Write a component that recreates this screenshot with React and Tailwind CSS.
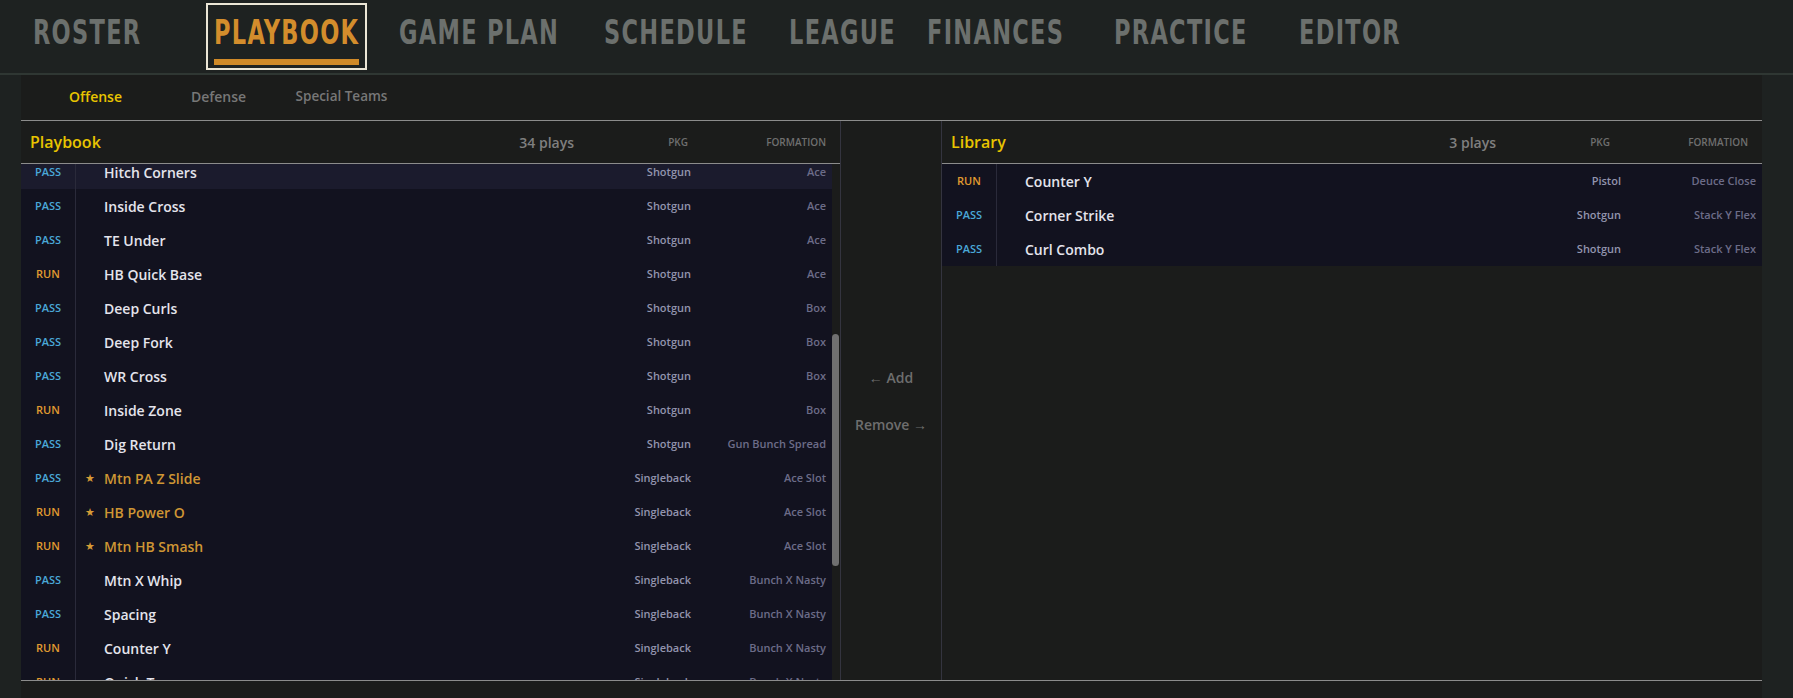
import React from 'react';

const NAV = [
  { label: 'ROSTER', w: 'w-[181px]' },
  { label: 'PLAYBOOK', w: 'w-[185px]', active: true },
  { label: 'GAME PLAN', w: 'w-[205px]' },
  { label: 'SCHEDULE', w: 'w-[185px]' },
  { label: 'LEAGUE', w: 'w-[138px]' },
  { label: 'FINANCES', w: 'w-[187px]' },
  { label: 'PRACTICE', w: 'w-[185px]' },
  { label: 'EDITOR', w: 'w-[160px]' },
];

// 34 plays total; the list is scrolled, so only a window of it is drawn
const PLAYS = [
  ['PASS', 'Slants', 'Shotgun', 'Ace'],
  ['PASS', 'Four Verticals', 'Shotgun', 'Ace'],
  ['PASS', 'Mesh', 'Shotgun', 'Ace'],
  ['RUN', 'Inside Zone', 'Shotgun', 'Ace'],
  ['PASS', 'Y Stick', 'Shotgun', 'Ace'],
  ['PASS', 'Smash', 'Shotgun', 'Ace'],
  ['RUN', 'HB Draw', 'Shotgun', 'Ace'],
  ['PASS', 'Flood', 'Shotgun', 'Ace'],
  ['PASS', 'Drive', 'Shotgun', 'Ace'],
  ['PASS', 'Dagger', 'Shotgun', 'Ace'],
  ['PASS', 'Curl Flat', 'Shotgun', 'Ace'],
  ['PASS', 'Hitch Corners', 'Shotgun', 'Ace'],
  ['PASS', 'Inside Cross', 'Shotgun', 'Ace'],
  ['PASS', 'TE Under', 'Shotgun', 'Ace'],
  ['RUN', 'HB Quick Base', 'Shotgun', 'Ace'],
  ['PASS', 'Deep Curls', 'Shotgun', 'Box'],
  ['PASS', 'Deep Fork', 'Shotgun', 'Box'],
  ['PASS', 'WR Cross', 'Shotgun', 'Box'],
  ['RUN', 'Inside Zone', 'Shotgun', 'Box'],
  ['PASS', 'Dig Return', 'Shotgun', 'Gun Bunch Spread'],
  ['PASS', 'Mtn PA Z Slide', 'Singleback', 'Ace Slot', true],
  ['RUN', 'HB Power O', 'Singleback', 'Ace Slot', true],
  ['RUN', 'Mtn HB Smash', 'Singleback', 'Ace Slot', true],
  ['PASS', 'Mtn X Whip', 'Singleback', 'Bunch X Nasty'],
  ['PASS', 'Spacing', 'Singleback', 'Bunch X Nasty'],
  ['RUN', 'Counter Y', 'Singleback', 'Bunch X Nasty'],
  ['RUN', 'Quick Toss', 'Singleback', 'Bunch X Nasty'],
  ['PASS', 'PA Boot', 'Singleback', 'Bunch X Nasty'],
  ['RUN', 'Outside Zone', 'Singleback', 'Deuce Close'],
  ['PASS', 'Corner Strike', 'Singleback', 'Deuce Close'],
  ['RUN', 'HB Stretch', 'Pistol', 'Deuce Close'],
  ['PASS', 'Curl Combo', 'Pistol', 'Stack Y Flex'],
  ['RUN', 'Power', 'Pistol', 'Stack Y Flex'],
  ['PASS', 'Levels', 'Pistol', 'Stack Y Flex'],
];

const FIRST_VISIBLE = 11;
const VISIBLE = PLAYS.slice(FIRST_VISIBLE, FIRST_VISIBLE + 16);

const LIBRARY = [
  ['RUN', 'Counter Y', 'Pistol', 'Deuce Close'],
  ['PASS', 'Corner Strike', 'Shotgun', 'Stack Y Flex'],
  ['PASS', 'Curl Combo', 'Shotgun', 'Stack Y Flex'],
];

const PlayRow = ({ play, hover }) => {
  const [type, name, pkg, formation, fav] = play;
  return (
    <div className={`flex items-center h-[34px] shrink-0 ${hover ? 'bg-[#1b1b2d]' : 'bg-[#12121f]'}`}>
      <div
        className={`w-[55px] h-full flex items-center justify-center border-r border-[#2a2a3a] text-[11px] font-semibold ${
          type === 'RUN' ? 'text-[#e09a30]' : 'text-[#4aa8d8]'
        }`}
      >
        {type}
      </div>
      <div className="w-[28px] text-center text-[11px] text-[#d59a36]">{fav ? '★' : ''}</div>
      <div className={`flex-1 text-[14px] font-semibold ${fav ? 'text-[#cf9634]' : 'text-[#e4e4ec]'}`}>{name}</div>
      <div className="text-[11px] font-semibold text-[#9294ae] text-right">{pkg}</div>
      <div className="w-[141px] pr-[6px] text-[11px] font-semibold text-[#6c6c88] text-right">{formation}</div>
    </div>
  );
};

const PanelHeader = ({ title, count }) => (
  <div className="h-[43px] shrink-0 flex items-center border-b border-[#8c8c8c] pl-[9px] pr-[14px]">
    <div className="flex-1 text-[16px] font-semibold text-[#e8c400]">{title}</div>
    <div className="pr-[54px] text-[14px] font-semibold text-[#7f7f7f]">{count}</div>
    <div className="w-[60px] text-right text-[10px] font-semibold text-[#6f6f6f]">PKG</div>
    <div className="w-[138px] text-right text-[10px] font-semibold text-[#6f6f6f]">FORMATION</div>
  </div>
);

export default function App() {
  return (
    <div className="w-[1793px] h-[698px] overflow-hidden bg-[#1e2221] font-['Open_Sans',sans-serif]">
      <nav className="h-[75px] flex items-start border-b-2 border-[#2f3733] pl-[25px]">
        {NAV.map((item) => (
          <div key={item.label} className={`${item.w} shrink-0 pt-[3px]`}>
            <div
              className={`inline-flex flex-col h-[67px] px-[6px] border-2 ${
                item.active ? 'border-[#ebe6d6]' : 'border-transparent'
              }`}
            >
              <span
                className={`mt-[8px] whitespace-nowrap text-[25px] leading-[40px] font-bold tracking-[1.3px] scale-y-[1.37] font-['DejaVu_Sans_Condensed',sans-serif] ${
                  item.active ? 'text-[#d38d2c]' : 'text-[#6c706d]'
                }`}
              >
                {item.label}
              </span>
              {item.active && <div className="mt-[6px] h-[6px] bg-[#d08a28]" />}
            </div>
          </div>
        ))}
      </nav>

      <div className="ml-[21px] w-[1741px] h-[623px] bg-[#1b1c1b] flex flex-col">
        <div className="h-[46px] shrink-0 flex items-center pl-[13px] pb-[3px] border-b border-[#8c8c8c]">
          <div className="w-[123px] text-center text-[14px] font-semibold text-[#e8c400]">Offense</div>
          <div className="w-[123px] text-center text-[14px] font-semibold text-[#777777]">Defense</div>
          <div className="w-[123px] text-center text-[13.5px] font-semibold text-[#777777]">Special Teams</div>
        </div>

        <div className="h-[560px] shrink-0 flex border-b border-[#8c8c8c]">
          <section className="w-[820px] shrink-0 flex flex-col border-r border-[#34343f]">
            <PanelHeader title="Playbook" count={`${PLAYS.length} plays`} />
            <div className="flex-1 flex min-h-0">
              <div className="flex-1 overflow-hidden">
                <div className="-mt-[9px] flex flex-col">
                  {VISIBLE.map((p, i) => (
                    <PlayRow key={i} play={p} hover={i === 0} />
                  ))}
                </div>
              </div>
              <div className="w-[8px] shrink-0 flex flex-col pt-[170px] pr-[1px]">
                <div className="h-[232px] rounded-full bg-[#707070]" />
              </div>
            </div>
          </section>

          <div className="w-[101px] shrink-0 flex flex-col items-center justify-center gap-[26px] border-r border-[#34343f] text-[14px] font-semibold text-[#6e6e6e]">
            <div>← Add</div>
            <div>Remove →</div>
          </div>

          <section className="flex-1 flex flex-col">
            <PanelHeader title="Library" count={`${LIBRARY.length} plays`} />
            <div className="flex flex-col">
              {LIBRARY.map((p, i) => (
                <PlayRow key={i} play={p} />
              ))}
            </div>
          </section>
        </div>
      </div>
    </div>
  );
}
